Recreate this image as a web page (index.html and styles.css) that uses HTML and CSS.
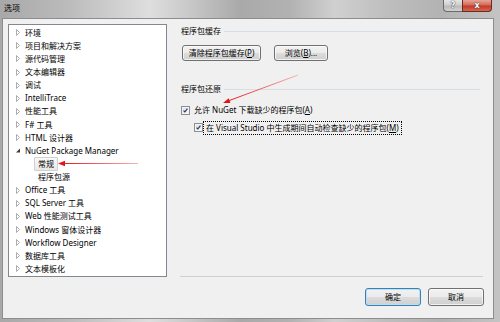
FILE: index.html
```html
<!DOCTYPE html>
<html lang="zh-CN">
<head>
<meta charset="utf-8">
<title>选项</title>
<link rel="stylesheet" href="styles.css">
</head>
<body>
<div class="window">
  <div class="titlebar">
    <span class="title">选项</span>
    <div class="caps">
      <span class="cap help">?</span>
      <span class="cap close">x</span>
    </div>
  </div>
  <div class="client">
    <div class="main">
      <ul class="tree">
        <li class="row"><svg class="tri" viewBox="0 0 4 7"><path d="M0.5 0.5L3.5 3.5L0.5 6.5Z"/></svg><span>环境</span></li>
        <li class="row"><svg class="tri" viewBox="0 0 4 7"><path d="M0.5 0.5L3.5 3.5L0.5 6.5Z"/></svg><span>项目和解决方案</span></li>
        <li class="row"><svg class="tri" viewBox="0 0 4 7"><path d="M0.5 0.5L3.5 3.5L0.5 6.5Z"/></svg><span>源代码管理</span></li>
        <li class="row"><svg class="tri" viewBox="0 0 4 7"><path d="M0.5 0.5L3.5 3.5L0.5 6.5Z"/></svg><span>文本编辑器</span></li>
        <li class="row"><svg class="tri" viewBox="0 0 4 7"><path d="M0.5 0.5L3.5 3.5L0.5 6.5Z"/></svg><span>调试</span></li>
        <li class="row"><svg class="tri" viewBox="0 0 4 7"><path d="M0.5 0.5L3.5 3.5L0.5 6.5Z"/></svg><span>IntelliTrace</span></li>
        <li class="row"><svg class="tri" viewBox="0 0 4 7"><path d="M0.5 0.5L3.5 3.5L0.5 6.5Z"/></svg><span>性能工具</span></li>
        <li class="row"><svg class="tri" viewBox="0 0 4 7"><path d="M0.5 0.5L3.5 3.5L0.5 6.5Z"/></svg><span>F# 工具</span></li>
        <li class="row"><svg class="tri" viewBox="0 0 4 7"><path d="M0.5 0.5L3.5 3.5L0.5 6.5Z"/></svg><span>HTML 设计器</span></li>
        <li class="row"><svg class="tri open" viewBox="0 0 4 7"><path d="M4 1.5L4 5.5L0 5.5Z"/></svg><span>NuGet Package Manager</span></li>
        <li class="row child"><span class="sel">常规</span></li>
        <li class="row child"><span>程序包源</span></li>
        <li class="row"><svg class="tri" viewBox="0 0 4 7"><path d="M0.5 0.5L3.5 3.5L0.5 6.5Z"/></svg><span>Office 工具</span></li>
        <li class="row"><svg class="tri" viewBox="0 0 4 7"><path d="M0.5 0.5L3.5 3.5L0.5 6.5Z"/></svg><span>SQL Server 工具</span></li>
        <li class="row"><svg class="tri" viewBox="0 0 4 7"><path d="M0.5 0.5L3.5 3.5L0.5 6.5Z"/></svg><span>Web 性能测试工具</span></li>
        <li class="row"><svg class="tri" viewBox="0 0 4 7"><path d="M0.5 0.5L3.5 3.5L0.5 6.5Z"/></svg><span>Windows 窗体设计器</span></li>
        <li class="row"><svg class="tri" viewBox="0 0 4 7"><path d="M0.5 0.5L3.5 3.5L0.5 6.5Z"/></svg><span>Workflow Designer</span></li>
        <li class="row"><svg class="tri" viewBox="0 0 4 7"><path d="M0.5 0.5L3.5 3.5L0.5 6.5Z"/></svg><span>数据库工具</span></li>
        <li class="row"><svg class="tri" viewBox="0 0 4 7"><path d="M0.5 0.5L3.5 3.5L0.5 6.5Z"/></svg><span>文本模板化</span></li>
      </ul>
      <div class="panel">
        <div class="group-head first"><span>程序包缓存</span><span class="rule"></span></div>
        <div class="btn-row">
          <button class="btn clear">清除程序包缓存(<u>P</u>)</button>
          <button class="btn browse">浏览(<u>B</u>)...</button>
        </div>
        <div class="group-head second"><span>程序包还原</span><span class="rule"></span></div>
        <div class="check one">
          <span class="box"><svg viewBox="0 0 9 9"><path d="M2 4.6L3.7 6.4L7 2.2"/></svg></span>
          <span class="ctext">允许 NuGet 下载缺少的程序包(<u>A</u>)</span>
        </div>
        <div class="check two">
          <span class="box"><svg viewBox="0 0 9 9"><path d="M2 4.6L3.7 6.4L7 2.2"/></svg></span>
          <span class="ctext focus">在 Visual Studio 中生成期间自动检查缺少的程序包(<u>M</u>)</span>
        </div>
        <div class="sep"></div>
      </div>
    </div>
    <div class="footer">
      <button class="btn ok">确定</button>
      <button class="btn cancel">取消</button>
    </div>
  </div>
  <svg class="annot" viewBox="0 0 500 322">
    <defs>
      <linearGradient id="g1" gradientUnits="userSpaceOnUse" x1="138" y1="163" x2="60" y2="163">
        <stop offset="0" stop-color="#f6b4b4"/>
        <stop offset="1" stop-color="#e3151b"/>
      </linearGradient>
      <linearGradient id="g2" gradientUnits="userSpaceOnUse" x1="298" y1="75" x2="226" y2="102">
        <stop offset="0" stop-color="#f6b4b4"/>
        <stop offset="1" stop-color="#e3151b"/>
      </linearGradient>
    </defs>
    <line x1="138" y1="163.5" x2="63" y2="163.5" stroke="url(#g1)" stroke-width="1"/>
    <path d="M58 163.5L65 160.8L65 166.2Z" fill="#e3151b"/>
    <line x1="298" y1="75" x2="228" y2="101" stroke="url(#g2)" stroke-width="1"/>
    <path d="M223 103L230.4 102.9L228.7 98.2Z" fill="#e3151b"/>
  </svg>
</div>
</body>
</html>
```

FILE: styles.css
```css
* { box-sizing: border-box; margin: 0; padding: 0; }
html, body { width: 500px; height: 322px; overflow: hidden; }
body {
  font-family: "Noto Sans", "Noto Sans CJK SC", sans-serif;
  font-size: 8px;
  color: #000;
  background: #b4b4b4;
}
.window {
  position: relative;
  width: 500px;
  height: 322px;
  display: flex;
  flex-direction: column;
  padding: 0 7px 4px 3px;
  background: linear-gradient(90deg, #a8a8a8 0%, #bcbcbc 14%, #dedede 30%, #c8c8c8 38%, #a9a9a9 48%, #b2b2b2 58%, #d0d0d0 67%, #bdbdbd 78%, #b3b3b3 88%, #c4c4c4 100%);
}
.titlebar {
  height: 19px;
  flex: none;
  display: flex;
  justify-content: space-between;
  align-items: flex-start;
}
.title { margin-top: 3px; margin-left: 1px; line-height: 10px; font-size: 8px; }
.caps { display: flex; margin-right: 1px; }
.cap {
  height: 12px;
  display: flex;
  align-items: center;
  justify-content: center;
  color: #fff;
  font-family: "DejaVu Sans", sans-serif;
  font-weight: bold;
  font-size: 8px;
  text-shadow: 0 0 1px #333, 0 0 1px #333;
  border: 1px solid #6a6a6a;
  border-top: none;
}
.help {
  width: 19px;
  border-radius: 0 0 0 4px;
  border-right: none;
  background: linear-gradient(#e6e6e6, #cfcfcf 45%, #b9b9b9 55%, #d2d2d2);
}
.close {
  width: 30px;
  border-radius: 0 0 4px 0;
  border-color: #6b2a22;
  background: linear-gradient(#e9a397, #d46a5b 45%, #c2392a 55%, #d5674f);
}
.client {
  flex: 1;
  background: #f0f0f0;
  box-shadow: 0 0 0 1px #8d8d8d;
  padding: 5px 10px 0 5px;
  display: flex;
  flex-direction: column;
}
.main { display: flex; height: 253px; flex: none; }
.tree {
  list-style: none;
  width: 159px;
  height: 253px;
  border: 1px solid #828790;
  background: #fff;
  padding-top: 1.1px;
}
.row {
  height: 13.13px;
  display: flex;
  align-items: center;
  white-space: nowrap;
  line-height: 12px;
}
.tri {
  width: 4px;
  height: 7px;
  margin-left: 7px;
  margin-right: 5px;
  flex: none;
  fill: none;
  stroke: #a4a4a4;
  stroke-width: 0.9;
}
.tri.open { fill: #3a3a3a; stroke: none; }
.row.child { padding-left: 29px; }
.sel {
  margin-left: -4px;
  padding: 0 3px;
  height: 14px;
  line-height: 12px;
  border: 1px solid #d0d0d0;
  border-radius: 1px;
  background: linear-gradient(#f9f9f9, #e8e8e8);
}
.panel {
  flex: 1;
  margin-left: 13px;
  display: flex;
  flex-direction: column;
  padding-left: 1px;
}
.group-head {
  height: 13px;
  display: flex;
  align-items: center;
  line-height: 12px;
  white-space: nowrap;
}
.rule {
  flex: 1;
  height: 1px;
  background: #d5dfe5;
  margin: 1px 3px 0 3px;
}
.group-head.second { margin-top: 21px; }
.btn-row { display: flex; margin-top: 8px; }
.btn {
  font-family: inherit;
  font-size: 8px;
  color: #000;
  border: 1px solid #707070;
  border-radius: 3px;
  background: linear-gradient(#f2f2f2, #ebebeb 50%, #dddddd 50%, #cfcfcf);
  box-shadow: inset 0 0 0 1px rgba(255,255,255,0.7);
  display: flex;
  align-items: center;
  justify-content: center;
  line-height: 10px;
  white-space: nowrap;
}
.btn.clear { width: 79px; height: 16px; margin-left: 1px; }
.btn.browse { width: 54px; height: 16px; margin-left: 13px; }
.check {
  display: flex;
  align-items: center;
  white-space: nowrap;
  line-height: 12px;
}
.check.one { margin-top: 8.5px; height: 13px; }
.check.two { margin-top: 4px; height: 14px; padding-left: 13px; }
.box {
  width: 9px;
  height: 9px;
  flex: none;
  border: 1px solid #8e8f8f;
  background: linear-gradient(135deg, #dcdcdc, #fafafa);
  box-shadow: inset 0 0 0 1px #f4f4f4;
  display: flex;
}
.box svg { width: 7px; height: 7px; fill: none; stroke: #233a78; stroke-width: 1.5; }
.check.one .box { margin-right: 4px; }
.check.two .box { margin-right: 0; }
.ctext.focus {
  border: 1px dotted #000;
  padding: 0 2px;
  height: 14px;
  line-height: 12px;
  margin-left: 0;
}
.sep {
  margin-top: auto;
  height: 1px;
  background: #cfcfcf;
  margin-right: -0px;
  margin-left: -1px;
}
.footer {
  display: flex;
  justify-content: flex-end;
  margin-top: 11px;
  margin-right: -1px;
  gap: 7px;
}
.footer .btn { width: 56px; height: 18px; }
.btn.ok {
  border-color: #3c7fb1;
  box-shadow: inset 0 0 0 1px #b4e1f8;
}
.annot {
  position: absolute;
  left: 0;
  top: 0;
  width: 500px;
  height: 322px;
  pointer-events: none;
}
```
